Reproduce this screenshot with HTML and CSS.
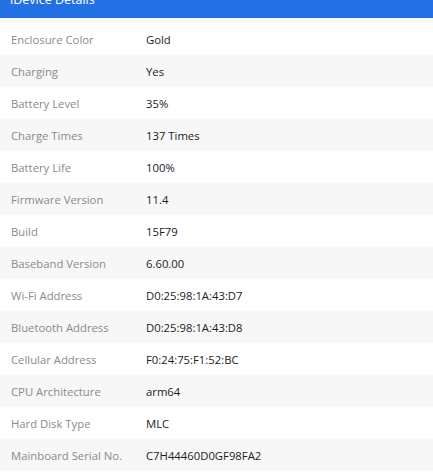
FILE: index.html
```html
<!DOCTYPE html>
<html lang="en">
<head>
    <meta charset="UTF-8">
    <title>iDevice Details</title>
    <link rel="stylesheet" href="styles.css">
</head>
<body>
    <div class="details-panel">
        <div class="panel-title">iDevice Details</div>
        <div class="panel-body">
            <div class="detail-row"><span class="label">Enclosure Color</span><span class="value">Gold</span></div>
            <div class="detail-row"><span class="label">Charging</span><span class="value">Yes</span></div>
            <div class="detail-row"><span class="label">Battery Level</span><span class="value">35%</span></div>
            <div class="detail-row"><span class="label">Charge Times</span><span class="value">137 Times</span></div>
            <div class="detail-row"><span class="label">Battery Life</span><span class="value">100%</span></div>
            <div class="detail-row"><span class="label">Firmware Version</span><span class="value">11.4</span></div>
            <div class="detail-row"><span class="label">Build</span><span class="value">15F79</span></div>
            <div class="detail-row"><span class="label">Baseband Version</span><span class="value">6.60.00</span></div>
            <div class="detail-row"><span class="label">Wi-Fi Address</span><span class="value">D0:25:98:1A:43:D7</span></div>
            <div class="detail-row"><span class="label">Bluetooth Address</span><span class="value">D0:25:98:1A:43:D8</span></div>
            <div class="detail-row"><span class="label">Cellular Address</span><span class="value">F0:24:75:F1:52:BC</span></div>
            <div class="detail-row"><span class="label">CPU Architecture</span><span class="value">arm64</span></div>
            <div class="detail-row"><span class="label">Hard Disk Type</span><span class="value">MLC</span></div>
            <div class="detail-row"><span class="label">Mainboard Serial No.</span><span class="value">C7H44460D0GF98FA2</span></div>
        </div>
    </div>
</body>
</html>
```

FILE: styles.css
```css
body {
    margin: 0;
    font-family: 'Open Sans', sans-serif;
    background: #fff;
    overflow: hidden;
}
.details-panel {
    margin-top: -18px; /* title is scrolled partly out of view */
}
.panel-title {
    height: 36px;
    line-height: 36px;
    background: #2270e3;
    color: #fff;
    font-size: 12.5px;
    padding-left: 10px;
}
.panel-body {
    padding-top: 5px;
    background: #f7f7f7;
}
.detail-row {
    display: flex;
    height: 32px;
    align-items: center;
    font-size: 11.3px;
    background: #fff;
}
.detail-row:nth-child(even) {
    background: #f7f7f7;
}
.label {
    width: 135px;
    padding-left: 11px;
    color: #8a8a8a;
}
.value {
    color: #1c1c1c;
}
```
